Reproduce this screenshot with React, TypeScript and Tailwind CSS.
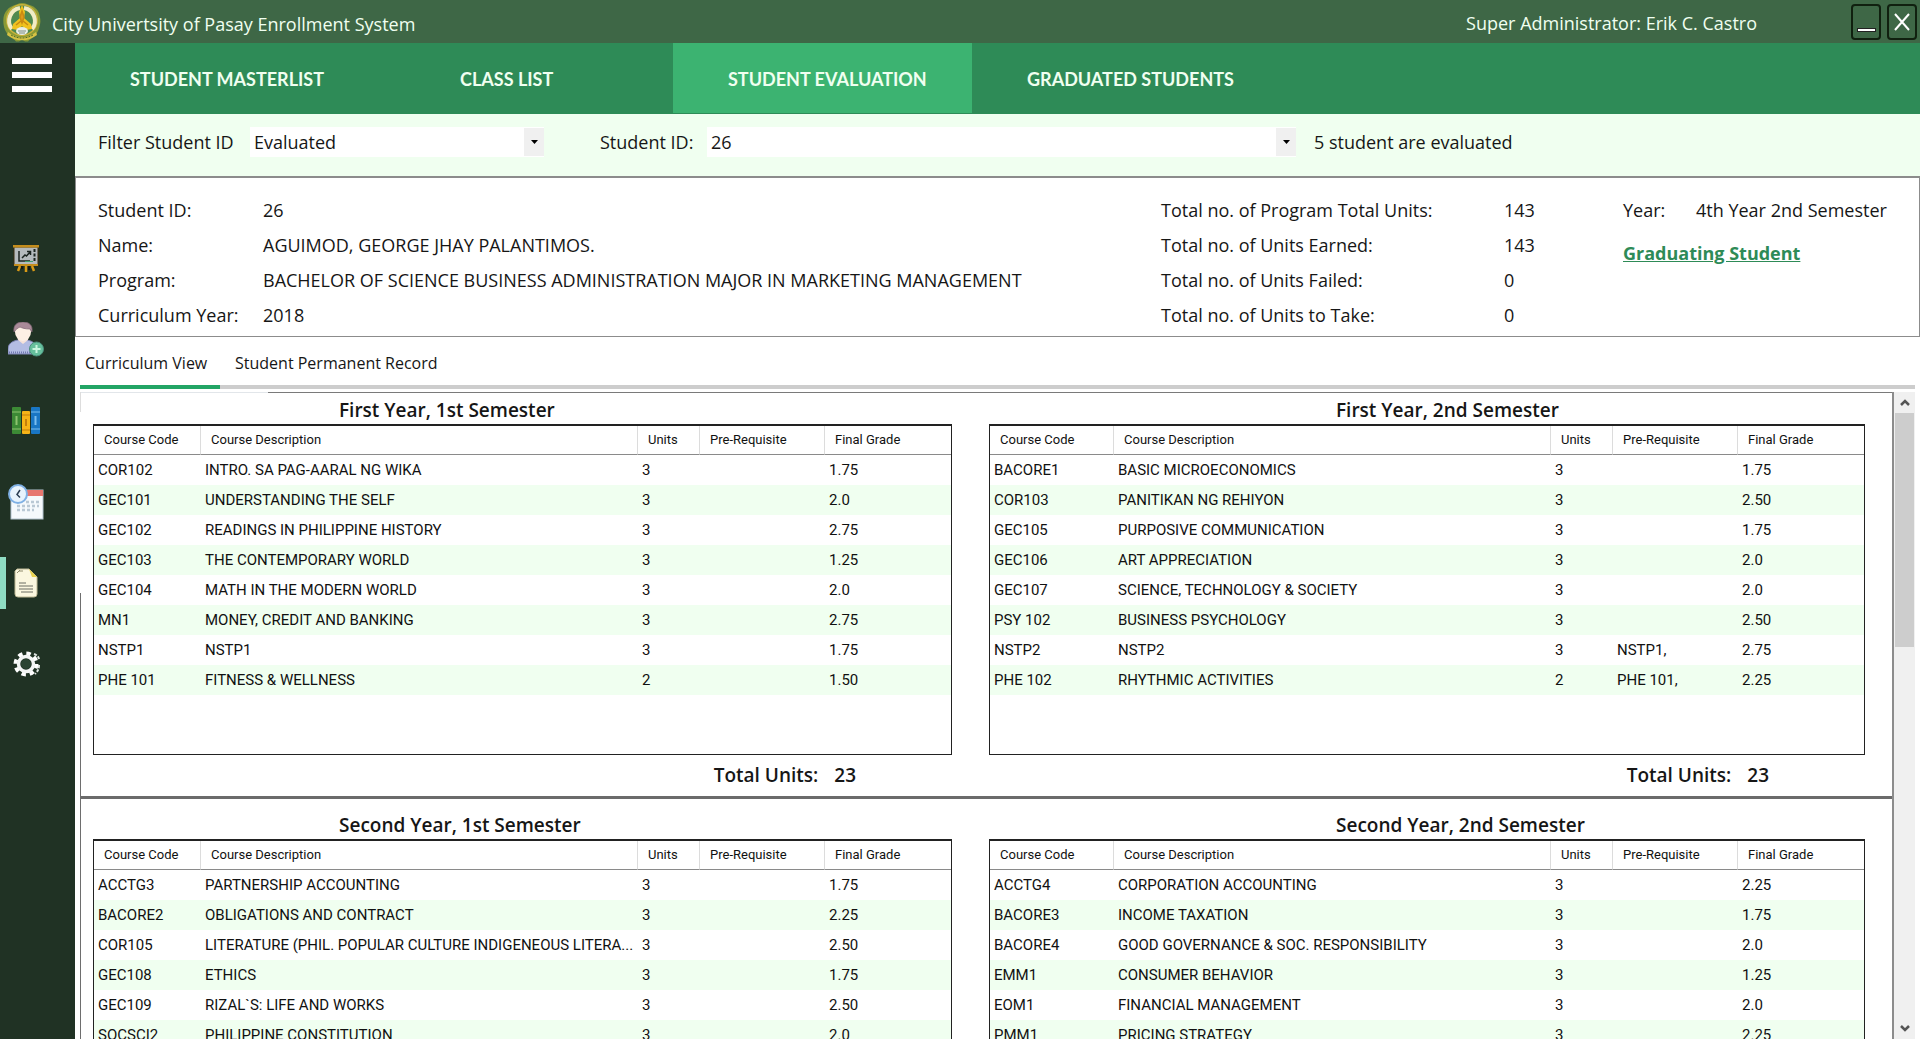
import type { ReactNode } from "react";

type Course = [code: string, description: string, units: string, prerequisite: string, grade: string];

const FIRST_YEAR_FIRST: Course[] = [
  ["COR102", "INTRO. SA PAG-AARAL NG WIKA", "3", "", "1.75"],
  ["GEC101", "UNDERSTANDING THE SELF", "3", "", "2.0"],
  ["GEC102", "READINGS IN PHILIPPINE HISTORY", "3", "", "2.75"],
  ["GEC103", "THE CONTEMPORARY WORLD", "3", "", "1.25"],
  ["GEC104", "MATH IN THE MODERN WORLD", "3", "", "2.0"],
  ["MN1", "MONEY, CREDIT AND BANKING", "3", "", "2.75"],
  ["NSTP1", "NSTP1", "3", "", "1.75"],
  ["PHE 101", "FITNESS & WELLNESS", "2", "", "1.50"],
];

const FIRST_YEAR_SECOND: Course[] = [
  ["BACORE1", "BASIC MICROECONOMICS", "3", "", "1.75"],
  ["COR103", "PANITIKAN NG REHIYON", "3", "", "2.50"],
  ["GEC105", "PURPOSIVE COMMUNICATION", "3", "", "1.75"],
  ["GEC106", "ART APPRECIATION", "3", "", "2.0"],
  ["GEC107", "SCIENCE, TECHNOLOGY & SOCIETY", "3", "", "2.0"],
  ["PSY 102", "BUSINESS PSYCHOLOGY", "3", "", "2.50"],
  ["NSTP2", "NSTP2", "3", "NSTP1,", "2.75"],
  ["PHE 102", "RHYTHMIC ACTIVITIES", "2", "PHE 101,", "2.25"],
];

const SECOND_YEAR_FIRST: Course[] = [
  ["ACCTG3", "PARTNERSHIP ACCOUNTING", "3", "", "1.75"],
  ["BACORE2", "OBLIGATIONS AND CONTRACT", "3", "", "2.25"],
  ["COR105", "LITERATURE (PHIL. POPULAR CULTURE INDIGENEOUS LITERA...", "3", "", "2.50"],
  ["GEC108", "ETHICS", "3", "", "1.75"],
  ["GEC109", "RIZAL`S: LIFE AND WORKS", "3", "", "2.50"],
  ["SOCSCI2", "PHILIPPINE CONSTITUTION", "3", "", "2.0"],
];

const SECOND_YEAR_SECOND: Course[] = [
  ["ACCTG4", "CORPORATION ACCOUNTING", "3", "", "2.25"],
  ["BACORE3", "INCOME TAXATION", "3", "", "1.75"],
  ["BACORE4", "GOOD GOVERNANCE & SOC. RESPONSIBILITY", "3", "", "2.0"],
  ["EMM1", "CONSUMER BEHAVIOR", "3", "", "1.25"],
  ["EOM1", "FINANCIAL MANAGEMENT", "3", "", "2.0"],
  ["PMM1", "PRICING STRATEGY", "3", "", "2.25"],
];

function Seal() {
  return (
    <svg viewBox="0 0 40 40" className="size-10 shrink-0" aria-hidden="true">
      <path d="M20 1c4 0 6 1.500 9 2.500s7 4 8 8 2 7 1 11-2 8-5 11-6 4-7 6h-3l-3-2-3 2h-3c-1-2-4-3-7-6S2 27 1.500 22s0-9 2-12 4-5 7-6 6-3 9.500-3z" fill="#8a9a35" />
      <circle cx="20" cy="18" r="16" fill="#c9b23c" />
      <circle cx="20" cy="18" r="14.500" fill="#4f8a50" />
      <path d="M10 27A13 13 0 0 1 18 6M30 27A13 13 0 0 0 22 6" fill="none" stroke="#f2ecc4" strokeWidth="4" />
      <path d="M20 3l3 7-1 6 7 6 1 5-6 1-4-4-4 4-6-1 1-5 7-6-1-6z" fill="#f0c21f" />
      <path d="M20 9l2 6-2 6-2-6zM14 23l5-4M26 23l-5-4" stroke="#c98a12" strokeWidth="1.500" fill="#e09a1a" />
      <ellipse cx="20" cy="29" rx="6" ry="4" fill="#e9eee6" />
      <path d="M16 29h8M17 31h6" stroke="#7d8c84" strokeWidth="1" />
      <path d="M6 30c8 7 20 7 28 0l1 3c-9 7-21 7-30 0z" fill="#d6c244" />
      <path d="M9 33c7 4 15 4 22 0" stroke="#4c6b2d" strokeWidth="1" strokeDasharray="2 1" fill="none" />
    </svg>
  );
}

function BoardIcon() {
  return (
    <svg viewBox="0 0 28 30" className="h-[30px] w-7">
      <path d="M8 22l-2 5M14 22v6M20 22l2 5" stroke="#d99a16" strokeWidth="2.500" />
      <path d="M10 22v3M17 22v4" stroke="#111" strokeWidth="1.500" />
      <rect x="2" y="3" width="24" height="18" fill="#b5babd" stroke="#3a2c10" />
      <rect x="1" y="1" width="26" height="2.500" fill="#c48d1d" />
      <rect x="2" y="20" width="24" height="2" fill="#c48d1d" />
      <path d="M7 7v10h11" stroke="#1c2420" strokeWidth="1.500" fill="none" />
      <path d="M10 14l3-3 1.500 1L18 8M15 7.500h3.500V11" stroke="#1c2420" strokeWidth="1.500" fill="none" />
      <path d="M13 17.500h8" stroke="#3f9c6b" />
      <path d="M22.500 5v12" stroke="#1c2420" strokeWidth="2" strokeDasharray="3 1.500" />
    </svg>
  );
}

function PersonIcon() {
  return (
    <svg viewBox="0 0 36 36" className="size-9">
      <path d="M0 32v-5c0-5 4-8 10-9h9c6 1 9 4 10 9v5z" fill="#b3bce3" stroke="#7d84b5" />
      <path d="M1 30.500h26" stroke="#7179b0" strokeWidth="2" strokeDasharray="1 1" />
      <path d="M10 18l5 4 5-4v-3H10z" fill="#f6e3da" />
      <ellipse cx="15" cy="10" rx="8" ry="9" fill="#fdefe4" />
      <path d="M6 10C5 3 9 0 15 0s10 3 9 10l-2-3c-5 0-8-1-10-2-2 1-4 2-6 5z" fill="#a98a98" stroke="#7f6574" strokeWidth=".7" />
      <circle cx="28.500" cy="27" r="7" fill="#66bf9c" stroke="#4a8f7c" />
      <path d="M28.500 23v8M24.500 27h8" stroke="#c9f5df" strokeWidth="2" />
    </svg>
  );
}

function BooksIcon() {
  return (
    <svg viewBox="0 0 28 28" className="size-7">
      <rect x="0" y="0" width="9" height="27" rx="1" fill="#3c8a35" />
      <rect x="10" y="4" width="8" height="23" rx="1" fill="#f6b418" />
      <rect x="19" y="0" width="9" height="27" rx="1" fill="#1976c4" />
      <path d="M0 5h9M0 22h9" stroke="#8cc46f" />
      <path d="M10 8h8M10 23h8" stroke="#c47f0b" />
      <path d="M19 5h9M19 22h9" stroke="#79bdf0" />
      <path d="M4.500 9v9" stroke="#8cc46f" strokeWidth="2" />
      <path d="M14 12v7" stroke="#c47f0b" strokeWidth="2" />
      <path d="M23.500 9v9" stroke="#79bdf0" strokeWidth="2" />
    </svg>
  );
}

function CalendarIcon() {
  return (
    <svg viewBox="0 0 36 36" className="size-9">
      <rect x="3" y="6" width="32" height="29" fill="#f5f9fc" stroke="#b3c3cf" />
      <rect x="3" y="6" width="32" height="6" fill="#e77770" />
      <path d="M18 18h13M9 22h22M9 26h17" stroke="#b9c8d4" strokeWidth="2.500" strokeDasharray="3 2" />
      <circle cx="10" cy="10" r="9" fill="#e8f3fd" stroke="#7fb0e4" strokeWidth="2" />
      <path d="M12 6l-3 4.500 3 3" stroke="#2b3d52" strokeWidth="1.500" fill="none" />
    </svg>
  );
}

function DocumentIcon() {
  return (
    <svg viewBox="0 0 24 30" className="h-[30px] w-6">
      <path d="M3 1h12l8 8v17a3 3 0 0 1-3 3H4a3 3 0 0 1-3-3V3z" fill="#fbf7df" stroke="#bdb894" />
      <path d="M15 1l8 8h-5z" fill="#e9d34f" />
      <path d="M3 5l3-3M5 3h4" stroke="#8f8b6c" />
      <path d="M5 15h7M5 18h14M5 21h14M7 24h12" stroke="#6a6d63" strokeWidth="1" />
    </svg>
  );
}

function GearIcon() {
  return (
    <svg viewBox="0 0 30 28" className="h-7 w-[30px]">
      <circle cx="14" cy="14" r="10.500" fill="none" stroke="#fff" strokeWidth="4" strokeDasharray="4.400 3.850" />
      <circle cx="14" cy="14" r="7.500" fill="none" stroke="#f4f6f5" strokeWidth="3.500" />
      <path d="M22 4c3 1 5 3 5 6M27 15c0 4-1 6-4 9" stroke="#dfe5e1" strokeWidth="2" strokeDasharray="3 1.500" fill="none" />
      <circle cx="14" cy="14" r="5" fill="#2b4432" />
    </svg>
  );
}

const SIDE_ITEMS: { label: string; icon: ReactNode; current?: boolean; pad: string }[] = [
  { label: "Dashboard", icon: <BoardIcon />, pad: "pl-3" },
  { label: "Enrollment", icon: <PersonIcon />, pad: "pl-2" },
  { label: "Courses", icon: <BooksIcon />, pad: "pl-3" },
  { label: "Schedule", icon: <CalendarIcon />, pad: "pl-2" },
  { label: "Students", icon: <DocumentIcon />, current: true, pad: "pl-2" },
  { label: "Settings", icon: <GearIcon />, pad: "pl-3" },
];

function Sidebar() {
  return (
    <aside className="w-[75px] shrink-0 bg-[#203224]">
      <div className="flex h-[175px] items-start pt-[15px] pl-3">
        <button aria-label="Toggle menu" className="flex w-10 flex-col gap-2">
          <span className="h-1.5 bg-white" />
          <span className="h-1.5 bg-white" />
          <span className="h-1.5 bg-white" />
        </button>
      </div>
      <nav className="flex flex-col">
        {SIDE_ITEMS.map((item) => (
          <button key={item.label} aria-label={item.label} className="flex h-[81px] items-center">
            {item.current && <span className="h-[52px] w-1.5 bg-[#8fdcc3]" />}
            <span className={item.pad}>{item.icon}</span>
          </button>
        ))}
      </nav>
    </aside>
  );
}

function Picker({ id, value, className }: { id: string; value: string; className: string }) {
  return (
    <div className={`relative h-[30px] bg-white ${className}`}>
      <select id={id} defaultValue={value} className="size-full appearance-none bg-transparent pl-1 outline-none">
        <option>{value}</option>
      </select>
      <span className="pointer-events-none absolute inset-y-px right-0 flex w-5 items-center justify-center bg-[#f0f0f0]">
        <svg viewBox="0 0 7 4" className="h-1 w-[7px]">
          <path d="M0 0h7L3.500 4z" fill="#000" />
        </svg>
      </span>
    </div>
  );
}

function CourseTable({ rows, codeWidth, label }: { rows: Course[]; codeWidth: string; label: string }) {
  const head = "border-b border-[#8a8a8a] pl-2.5 text-left font-normal";
  const divided = `${head} border-r border-r-[#dcdcdc]`;
  return (
    <div className="h-[331px] border border-t-2 border-[#222] bg-white font-['Roboto',sans-serif]">
      <table aria-label={label} className="w-full table-fixed border-separate border-spacing-0 text-[15px] text-[#111]">
        <colgroup>
          <col className={codeWidth} />
          <col />
          <col className="w-[62px]" />
          <col className="w-[125px]" />
          <col className="w-[126px]" />
        </colgroup>
        <thead>
          <tr className="h-[29px] text-[13px]">
            <th className={divided}>Course Code</th>
            <th className={divided}>Course Description</th>
            <th className={divided}>Units</th>
            <th className={divided}>Pre-Requisite</th>
            <th className={head}>Final Grade</th>
          </tr>
        </thead>
        <tbody>
          {rows.map((row) => (
            <tr key={row[0]} className="h-[30px] even:bg-[#f0fff0]">
              {row.map((cell, i) => (
                <td key={i} className="pl-1 whitespace-nowrap">
                  {cell}
                </td>
              ))}
            </tr>
          ))}
        </tbody>
      </table>
    </div>
  );
}

interface TermProps {
  title: string;
  rows: Course[];
  total: string;
  grow: string;
  codeWidth: string;
  indent: string;
  headHeight: string;
}

function Term({ title, rows, total, grow, codeWidth, indent, headHeight }: TermProps) {
  return (
    <section className={`min-w-0 basis-0 ${grow}`}>
      <h2 className={`flex items-end pb-px text-[19px] leading-[26px] font-semibold ${indent} ${headHeight}`}>{title}</h2>
      <CourseTable rows={rows} codeWidth={codeWidth} label={title} />
      <p className="flex h-[41px] items-center justify-end gap-4 pr-24 pb-0.5 text-[19px] font-semibold">
        <span>Total Units:</span>
        <span>{total}</span>
      </p>
    </section>
  );
}

function YearRow({ terms, headHeight }: { terms: [string, Course[], string][]; headHeight: string }) {
  return (
    <div className="flex gap-[37px] pr-[27px] pl-3">
      <Term title={terms[0][0]} rows={terms[0][1]} total={terms[0][2]} grow="grow-[859]" codeWidth="w-[107px]" indent="pl-[246px]" headHeight={headHeight} />
      <Term title={terms[1][0]} rows={terms[1][1]} total={terms[1][2]} grow="grow-[876]" codeWidth="w-[124px]" indent="pl-[347px]" headHeight={headHeight} />
    </div>
  );
}

function Facts({ items, className }: { items: [string, string][]; className: string }) {
  return (
    <dl className={`grid auto-rows-[35px] content-start items-center ${className}`}>
      {items.map(([term, value]) => (
        <div key={term} className="contents">
          <dt>{term}</dt>
          <dd>{value}</dd>
        </div>
      ))}
    </dl>
  );
}

const NAV_TABS = [
  { label: "STUDENT MASTERLIST", look: "pl-[55px]" },
  { label: "CLASS LIST", look: "pl-[86px]" },
  { label: "STUDENT EVALUATION", look: "pl-[55px] bg-[#3cb371]" },
  { label: "GRADUATED STUDENTS", look: "pl-[55px]" },
];

export default function App() {
  return (
    <div className="flex h-screen flex-col overflow-hidden bg-white font-['Open_Sans',sans-serif] text-lg leading-6 text-[#161616]">
      <header className="flex h-[43px] shrink-0 items-center bg-[#3e6746] text-[#f0fff0]">
        <div className="flex flex-1 items-center gap-2.5 pl-0.5">
          <Seal />
          <h1 className="pt-1">City Univertsity of Pasay Enrollment System</h1>
        </div>
        <span className="pt-0.5 pr-[94px]">Super Administrator: Erik C. Castro</span>
        <div className="flex gap-1.5 pr-[3px]">
          <button aria-label="Minimize" className="flex h-9 w-[30px] items-end justify-center rounded-sm border-2 border-[#10200f] pb-1.5">
            <span className="h-1 w-[19px] border border-[#222] bg-white" />
          </button>
          <button aria-label="Close" className="flex h-9 w-[30px] items-center justify-center rounded-sm border-2 border-[#10200f]">
            <svg viewBox="0 0 16 18" className="h-[18px] w-4">
              <path d="M1 1l14 16M15 1L1 17" stroke="#fff" strokeWidth="2" />
            </svg>
          </button>
        </div>
      </header>

      <div className="flex min-h-0 flex-1">
        <Sidebar />
        <main className="flex min-w-0 flex-1 flex-col">
          <nav className="flex h-[71px] shrink-0 bg-[#2e8b57] font-['Lato',sans-serif] text-[18px] font-bold text-[#f0fff0]">
            {NAV_TABS.map((tab) => (
              <button key={tab.label} className={`mb-px w-[299px] pt-0.5 text-left ${tab.look}`}>
                {tab.label}
              </button>
            ))}
          </nav>

          <form className="flex h-[62px] shrink-0 items-center bg-[#f0fff0] pb-1.5 pl-[23px]">
            <label htmlFor="filter" className="w-[152px]">Filter Student ID</label>
            <Picker id="filter" value="Evaluated" className="w-[294px]" />
            <label htmlFor="student" className="w-[163px] pl-14">Student ID:</label>
            <Picker id="student" value="26" className="flex-1" />
            <output className="w-[624px] pl-[18px]">5 student are evaluated</output>
          </form>

          <section className="flex h-[161px] shrink-0 border border-t-2 border-[#8c8c8c] pt-3.5 pl-[22px]">
            <Facts
              className="flex-1 grid-cols-[165px_1fr]"
              items={[
                ["Student ID:", "26"],
                ["Name:", "AGUIMOD, GEORGE JHAY PALANTIMOS."],
                ["Program:", "BACHELOR OF SCIENCE BUSINESS ADMINISTRATION MAJOR IN MARKETING MANAGEMENT"],
                ["Curriculum Year:", "2018"],
              ]}
            />
            <Facts
              className="w-[462px] grid-cols-[343px_1fr]"
              items={[
                ["Total no. of Program Total Units:", "143"],
                ["Total no. of Units Earned:", "143"],
                ["Total no. of Units Failed:", "0"],
                ["Total no. of Units to Take:", "0"],
              ]}
            />
            <div className="w-[296px]">
              <Facts className="grid-cols-[73px_1fr]" items={[["Year:", "4th Year 2nd Semester"]]} />
              <a href="#graduating" className="mt-3.5 block font-bold text-[#2e8b57] underline">Graduating Student</a>
            </div>
          </section>

          <div role="tablist" className="flex h-[52px] shrink-0 pr-[5px] pl-[5px] text-base">
            <button role="tab" aria-selected="true" className="w-[140px] border-b-4 border-[#22a565] pt-1 pl-[5px] text-left">
              Curriculum View
            </button>
            <button role="tab" aria-selected="false" className="flex-1 border-b-4 border-[#cdcdcd] pt-1 pl-[15px] text-left">
              Student Permanent Record
            </button>
          </div>

          <div className="flex min-h-0 flex-1 pt-[3px] pr-[5px] pl-[5px]">
            <div className="flex w-px shrink-0 flex-col">
              <span className="h-5 bg-[#dddddd]" />
              <span className="h-[181px]" />
              <span className="flex-1 bg-[#6e6e6e]" />
            </div>
            <div className="flex min-w-0 flex-1 flex-col overflow-hidden border-r-2 border-[#8c8c8c]">
              <div className="flex h-px shrink-0">
                <span className="w-[187px] bg-[#e2e6ea]" />
                <span className="flex-1 bg-[#7a7a7a]" />
              </div>
              <YearRow
                headHeight="h-[31px]"
                terms={[
                  ["First Year, 1st Semester", FIRST_YEAR_FIRST, "23"],
                  ["First Year, 2nd Semester", FIRST_YEAR_SECOND, "23"],
                ]}
              />
              <hr className="h-[3px] shrink-0 border-0 bg-[#6b6b6b]" />
              <YearRow
                headHeight="h-10"
                terms={[
                  ["Second Year, 1st Semester", SECOND_YEAR_FIRST, "18"],
                  ["Second Year, 2nd Semester", SECOND_YEAR_SECOND, "18"],
                ]}
              />
            </div>
            <div className="flex w-[21px] shrink-0 flex-col bg-[#f0f0f0] px-px" aria-hidden="true">
              <span className="flex h-[21px] items-center justify-center">
                <svg viewBox="0 0 10 7" className="h-[7px] w-2.5">
                  <path d="M1 6l4-4 4 4" stroke="#555" strokeWidth="2.500" fill="none" />
                </svg>
              </span>
              <span className="h-[234px] bg-[#cdcdcd]" />
              <span className="flex-1" />
              <span className="flex h-[21px] items-center justify-center">
                <svg viewBox="0 0 10 7" className="h-[7px] w-2.5">
                  <path d="M1 1l4 4 4-4" stroke="#555" strokeWidth="2.500" fill="none" />
                </svg>
              </span>
            </div>
          </div>
        </main>
      </div>
    </div>
  );
}
